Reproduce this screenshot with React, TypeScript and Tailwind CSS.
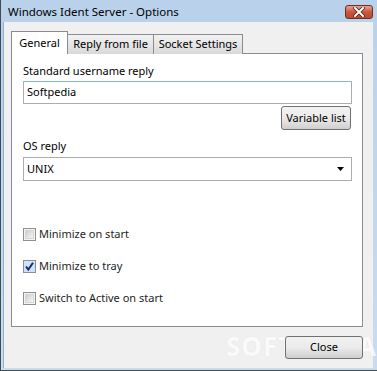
import React from "react";

const font = { fontFamily: '"Noto Sans", "Open Sans", sans-serif' };

function Checkbox({ checked, label }: { checked?: boolean; label: string }) {
  return (
    <div className="flex items-center h-[16px]">
      <div className="w-[13px] h-[13px] border border-[#8e8f8f] bg-[#f4f4f4] flex items-center justify-center">
        {checked ? (
          <svg width="11" height="11" viewBox="0 0 11 11">
            <rect x="0" y="0" width="11" height="11" fill="#cde3f7" />
            <path d="M2 5.5 L4.3 8.5 L9 1.8" stroke="#1c2a6e" strokeWidth="2" fill="none" />
          </svg>
        ) : (
          <div className="w-[9px] h-[9px] bg-gradient-to-br from-[#cfcfcf] to-[#f6f6f6] border border-[#d6d6d6]" />
        )}
      </div>
      <span className="ml-[3px] text-[11px] text-[#1e1e1e] leading-[16px]">{label}</span>
    </div>
  );
}

export default function App() {
  return (
    <div
      style={font}
      className="w-[377px] h-[371px] bg-gradient-to-b from-[#b9d1ea] to-[#c9dcf0] border-l border-[#434b52] flex flex-col overflow-hidden relative"
    >
      {/* Title bar */}
      <div className="h-[22px] flex items-center justify-between pl-[7px] pr-[4px]">
        <span className="text-[11.5px] text-black leading-none mt-[1px]">Windows Ident Server - Options</span>
        <div className="w-[28px] h-[14px] mt-[2px] rounded-[3px] border border-[#6d2f24] bg-gradient-to-b from-[#e8a493] via-[#c9553c] to-[#c04a30] flex items-center justify-center">
          <svg width="12" height="10" viewBox="0 0 12 10">
            <path d="M2 1 L10 9 M10 1 L2 9" stroke="#3d1c14" strokeWidth="3.4" strokeLinecap="square" />
            <path d="M2 1 L10 9 M10 1 L2 9" stroke="#ffffff" strokeWidth="2" strokeLinecap="square" />
          </svg>
        </div>
      </div>

      {/* Client area */}
      <div className="flex-1 ml-[2px] mr-[4px] mb-[3px] bg-[#f0f0f0] flex flex-col pl-[7px] pr-[10px] pt-[9px] border-l border-[#8cb0d6]">
        {/* Tabs */}
        <div className="flex items-end h-[23px] relative z-10">
          <div className="w-[57px] h-[23px] bg-white border border-[#898c95] border-b-0 flex items-center justify-center text-[11px] text-black">
            General
          </div>
          <div className="w-[87px] h-[20px] ml-[-1px] bg-gradient-to-b from-[#f2f2f2] to-[#d9d9d9] border border-[#898c95] border-b-0 flex items-center justify-center text-[11px] text-black">
            Reply from file
          </div>
          <div className="w-[90px] h-[20px] ml-[-1px] bg-gradient-to-b from-[#f2f2f2] to-[#d9d9d9] border border-[#898c95] border-b-0 flex items-center justify-center text-[11px] text-black">
            Socket Settings
          </div>
        </div>
        {/* Panel */}
        <div className="mt-[-1px] h-[274px] bg-white border border-[#898c95] flex flex-col pl-[11px] pr-[10px]">
          <div className="mt-[9px] text-[11px] text-black leading-[15px]">Standard username reply</div>
          <div className="mt-[3px] h-[23px] border border-[#abadb3] border-t-[#7eb4ea] flex items-center pl-[3px] text-[11px] text-black rounded-[1px]">
            Softpedia
          </div>
          <div className="flex justify-end mt-[2px] pr-[1px]">
            <div className="w-[70px] h-[24px] rounded-[3px] border border-[#707070] bg-gradient-to-b from-[#f2f2f2] via-[#ebebeb] to-[#cfcfcf] flex items-center justify-center text-[11px] text-black">
              Variable list
            </div>
          </div>
          <div className="mt-[8px] text-[11px] text-black leading-[15px]">OS reply</div>
          <div className="mt-[4px] h-[24px] border border-[#abadb3] flex items-center justify-between pl-[3px] pr-[7px] text-[11px] text-black">
            <span>UNIX</span>
            <svg width="7" height="4" viewBox="0 0 7 4">
              <path d="M0 0 H7 L3.5 4 Z" fill="#000" />
            </svg>
          </div>
          <div className="mt-[45px] flex flex-col gap-[16px]">
            <Checkbox label="Minimize on start" />
            <Checkbox checked label="Minimize to tray" />
            <Checkbox label="Switch to Active on start" />
          </div>
        </div>
        {/* Footer */}
        <div className="flex justify-end mt-[9px] relative">
          <span className="absolute right-[-14px] top-[-3px] text-[26px] font-bold tracking-[1px] text-[#ffffff] opacity-70 leading-none select-none" style={{ textShadow: "0 0 1px #d8d8d8" }}>
            SOFTPEDIA
          </span>
          <div className="w-[78px] h-[23px] rounded-[3px] border border-[#707070] bg-gradient-to-b from-[#f2f2f2] via-[#ebebeb] to-[#cfcfcf] flex items-center justify-center text-[11px] text-black relative">
            Close
          </div>
        </div>
      </div>
      <div className="absolute bottom-0 left-0 right-0 h-[1px] bg-[#434b52]" />
    </div>
  );
}
